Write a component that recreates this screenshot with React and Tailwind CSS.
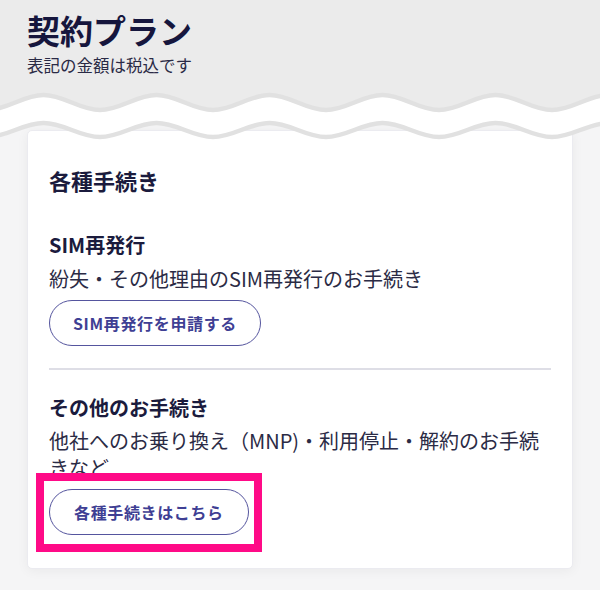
import React from "react";

function segs(yc, A, P, x0, xEnd) {
  const h = P / 2;
  const k = 0.3642 * h;
  const out = [];
  let x = x0;
  let atPeak = true;
  while (x < xEnd) {
    const y0 = atPeak ? yc - A : yc + A;
    const y1 = atPeak ? yc + A : yc - A;
    out.push([x, y0, x + k, y0, x + h - k, y1, x + h, y1]);
    x += h;
    atPeak = !atPeak;
  }
  return out;
}

function fwd(s) {
  return s.map((g) => ` C ${g[2]} ${g[3]} ${g[4]} ${g[5]} ${g[6]} ${g[7]}`).join("");
}
function rev(s) {
  return s
    .slice()
    .reverse()
    .map((g) => ` C ${g[4]} ${g[5]} ${g[2]} ${g[3]} ${g[0]} ${g[1]}`)
    .join("");
}

function Waves() {
  const P = 113;
  const x0 = 43.5 - P;
  const up = segs(102.5, 7.5, P, x0, 660);
  const lo = segs(130, 7, P, x0, 660);
  const upStart = `M ${up[0][0]} ${up[0][1]}`;
  const upEnd = up[up.length - 1];
  const loEnd = lo[lo.length - 1];
  const topFill = `${upStart}${fwd(up)} L ${upEnd[6]} 80 L ${x0} 80 Z`;
  const band = `${upStart}${fwd(up)} L ${loEnd[6]} ${loEnd[7]}${rev(lo)} Z`;
  const upLine = `${upStart}${fwd(up)}`;
  const loLine = `M ${lo[0][0]} ${lo[0][1]}${fwd(lo)}`;
  return (
    <svg
      className="absolute left-0 top-0 z-10 pointer-events-none"
      width="600"
      height="150"
      viewBox="0 0 600 150"
    >
      <path d={topFill} fill="#ebebeb" />
      <path d={band} fill="#ffffff" />
      <path d={upLine} fill="none" stroke="#e1e1e1" strokeWidth="4.5" />
      <path d={loLine} fill="none" stroke="#e1e1e1" strokeWidth="4.5" />
    </svg>
  );
}

export default function App() {
  const font = { fontFamily: '"Noto Sans CJK JP", "Noto Sans", sans-serif' };
  return (
    <div
      className="relative w-[600px] min-h-[590px] bg-[#f5f5f6] overflow-hidden"
      style={font}
    >
      <header className="h-[100px] bg-[#ebebeb] px-[27px] pt-[10px]">
        <h1 className="text-[33px] leading-[40px] font-bold text-[#16163d]">契約プラン</h1>
        <p className="mt-[4px] text-[16.5px] leading-[22px] text-[#2a2a45]">表記の金額は税込です</p>
      </header>
      <Waves />
      <main className="mx-[27px] mt-[30px] bg-white rounded-[5px] border border-[#ebebf0] shadow-[0_2px_12px_rgba(0,0,0,0.05)] px-[21px] pt-[33px] pb-[33px]">
        <h2 className="text-[22px] leading-[32px] font-bold text-[#1b1b3d]">各種手続き</h2>
        <h3 className="mt-[35px] text-[20px] leading-[28px] font-bold text-[#1b1b3d]">SIM再発行</h3>
        <p className="mt-[6px] text-[20px] leading-[28px] text-[#2b2b45]">
          紛失・その他理由のSIM再発行のお手続き
        </p>
        <button className="mt-[7px] h-[46px] inline-flex items-center justify-center rounded-full border-[1.5px] border-[#55559e] bg-white px-[23px] text-[16px] font-bold tracking-[0.04em] text-[#3f3f94]">
          SIM再発行を申請する
        </button>
        <div className="mt-[22px] h-[2px] bg-[#dedee6]" />
        <h3 className="mt-[24px] text-[20px] leading-[28px] font-bold text-[#1b1b3d]">その他のお手続き</h3>
        <p className="mt-[5px] text-[20px] leading-[27px] text-[#2b2b45]">
          他社へのお乗り換え（MNP)・利用停止・解約のお手続きなど
        </p>
        <div className="relative mt-[8px] w-fit">
          <button className="h-[46px] inline-flex items-center justify-center rounded-full border-[1.5px] border-[#55559e] bg-white px-[24px] text-[16px] font-bold tracking-[0.04em] text-[#3f3f94]">
            各種手続きはこちら
          </button>
          <div className="absolute left-[-13px] top-[-16px] w-[226px] h-[79px] border-[8px] border-[#ff0a87] pointer-events-none" />
        </div>
      </main>
    </div>
  );
}
